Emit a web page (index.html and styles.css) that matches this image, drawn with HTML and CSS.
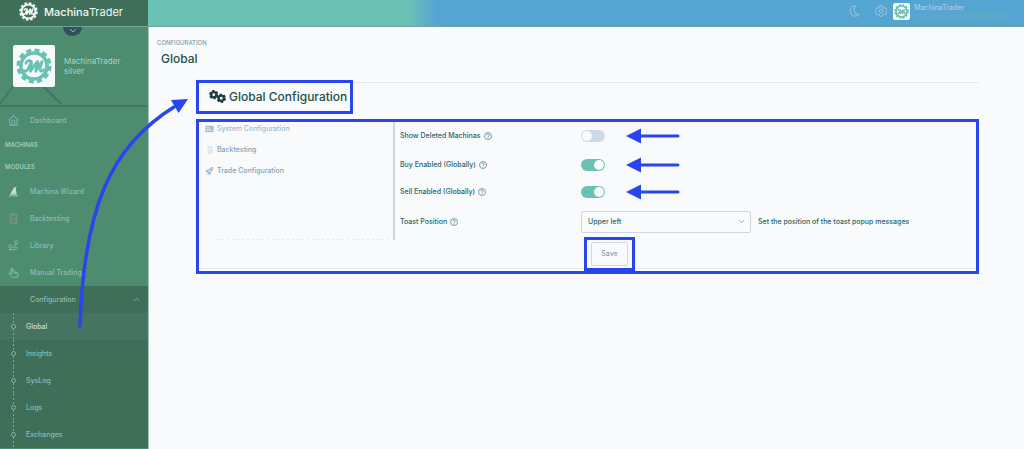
FILE: index.html
```html
<!DOCTYPE html>
<html lang="en">
<head>
<meta charset="utf-8">
<title>MachinaTrader - Global Configuration</title>
<link rel="stylesheet" href="styles.css">
</head>
<body>
<svg class="defs" aria-hidden="true">
  <symbol id="logo" viewBox="0 0 40 40">
    <circle cx="20" cy="20" r="17" fill="none" stroke="currentColor" stroke-width="5" stroke-dasharray="5.400 3.500"/>
    <circle cx="20" cy="20" r="14.500" fill="none" stroke="currentColor" stroke-width="4"/>
    <path d="M9 25c2 2 4 0 5-3l3-7c-3-2-6 0-6 2m6-2c1 4 0 7-1 11 3-4 5-8 8-11 0 4-2 7-2 11 3-5 4-9 7-11-1 4-3 8-2 10 1 1 2 1 4-1" fill="none" stroke="currentColor" stroke-width="3" stroke-linejoin="round" stroke-linecap="round"/>
  </symbol>
  <symbol id="help" viewBox="0 0 16 16">
    <circle cx="8" cy="8" r="7" fill="none" stroke="currentColor" stroke-width="1.800"/>
    <path d="M5.500 6.300c0-3.200 5-3.100 5 0 0 1.700-2.500 1.700-2.500 3.500M8 11v1.700" fill="none" stroke="currentColor" stroke-width="1.800"/>
  </symbol>
  <symbol id="arrow" viewBox="0 0 54 16">
    <path d="M12 8h40" stroke="currentColor" stroke-width="3" stroke-linecap="round"/>
    <path d="M0 8 15 .5v15z" fill="currentColor"/>
  </symbol>
  <symbol id="gear" viewBox="0 0 20 20">
    <circle cx="10" cy="10" r="5.500" fill="none" stroke="currentColor" stroke-width="5"/>
    <circle cx="10" cy="10" r="8" fill="none" stroke="currentColor" stroke-width="4" stroke-dasharray="4.800 3.578"/>
  </symbol>
</svg>

<header class="topbar">
  <a class="brand" href="#"><svg class="brand-logo"><use href="#logo"/></svg><span>Machina<span class="thin">Trader</span></span></a>
  <div class="tools">
    <button class="tool" aria-label="Dark mode"><svg viewBox="0 0 14 14"><path d="M8 1C3 1 1.500 4 1.500 7S4 13 7.500 13c2 0 3.500-1 4.500-2C6 11.500 4 5 8 1z"/></svg></button>
    <button class="tool" aria-label="Settings"><svg viewBox="0 0 14 14"><path d="m5.500 1h3l.5 2 1.500.8 2-.6L14 5.700l-1.400 1.400L14 8.500l-1.500 2.500-2-.6-1.500.8-.5 2h-3L5 11.200l-1.500-.8-2 .6L0 8.500l1.400-1.400L0 5.700l1.500-2.500 2 .6L5 3z"/><circle cx="7" cy="7" r="2"/></svg></button>
    <a class="account" href="#">
      <span class="account-avatar"><svg><use href="#logo"/></svg></span>
      <span class="account-text"><span>MachinaTrader</span><span class="mail">your-account@machinatrader.com</span></span>
    </a>
  </div>
</header>

<div class="shell">
  <aside class="sidebar">
    <button class="collapse" aria-label="Collapse profile"><svg viewBox="0 0 8 5"><path d="m1 1 3 3 3-3"/></svg></button>
    <section class="profile">
      <svg class="profile-lines" viewBox="0 0 148 20" aria-hidden="true"><path d="M0 19 14 0M42 0l19 19"/></svg>
      <span class="avatar"><svg><use href="#logo"/></svg></span>
      <p class="who">MachinaTrader<br>silver</p>
    </section>
    <nav>
      <a class="item" href="#"><svg viewBox="0 0 12 12"><path d="M.7 5.500 6 .8l5.300 4.700M2 4.500v6.800h8V4.500M4.500 11V7c0-2 3-2 3 0v4"/></svg>Dashboard</a>
      <h2 class="group">Machinas</h2>
      <h2 class="group">Modules</h2>
      <a class="item" href="#"><svg viewBox="0 0 12 12"><path class="fill" d="M2 9.500 6.500 1.500 9.500.8 8.500 3l1 6.500z"/><path class="mint" d="M.8 10.800h10.400M3.500 8.500h5.300"/></svg>Machina Wizard</a>
      <a class="item" href="#"><svg class="dim" viewBox="0 0 12 12"><path d="M2.500 1h7v10h-7zM4 3h3M4.500 5v4M7.500 4.500v4.500M6.500 7h2"/></svg>Backtesting</a>
      <a class="item" href="#"><svg viewBox="0 0 12 12"><circle cx="9" cy="2.500" r="1.700"/><circle cx="2.500" cy="7" r="1.700"/><path d="M9 4.200C9 7 5.500 5.500 5.500 7.500S10.500 7 10.500 9 7 10.500 1 10.700M2.500 8.700v2"/></svg>Library</a>
      <a class="item" href="#"><svg viewBox="0 0 12 12"><path d="M3.700 7.800V2c0-1.400 1.700-1.400 1.700 0v3.200L10 6c1 .2 1.200 1 1 2l-.7 3.300H5L1.300 7.500c-.7-1 .6-1.700 1.300-1zM7 5.500v1.700M8.800 6v1.500M1 3.500h1.500M6.800 3.500H8"/></svg>Manual Trading</a>
      <div class="submenu">
        <button class="item parent" aria-expanded="true"><span>Configuration</span><svg class="chev" viewBox="0 0 8 5"><path d="m1 4 3-3 3 3"/></svg></button>
        <ul>
          <li><a class="sub active" href="#">Global</a></li>
          <li><a class="sub" href="#">Insights</a></li>
          <li><a class="sub" href="#">SysLog</a></li>
          <li><a class="sub" href="#">Logs</a></li>
          <li><a class="sub" href="#">Exchanges</a></li>
        </ul>
      </div>
    </nav>
  </aside>

  <main class="main">
    <p class="crumb">Configuration</p>
    <h1>Global</h1>
    <div class="content">
      <div class="heading"><h2 class="marked title"><svg viewBox="0 0 34 26"><use href="#gear" x="0" y="0" width="19" height="19"/><use href="#gear" x="15" y="7" width="19" height="19"/></svg>Global Configuration</h2></div>
      <form class="marked panel">
        <nav class="tabs">
          <a class="pale" href="#"><svg viewBox="0 0 10 8"><path class="fill" d="M.5.5h9v7h-9z"/><path class="cut" d="M2 2.300h2M2 4h2M2 5.700h2M5.500 2v4M7 5.700h1.500"/></svg>System Configuration</a>
          <a href="#"><svg class="pale" viewBox="0 0 10 8"><path d="M2.500.5h5v7h-4V5M2.500 2.500h3M4 4.500h3"/></svg>Backtesting</a>
          <a href="#"><svg viewBox="0 0 10 10"><path d="M3 6C4 3 6 .8 9.300.7 9.300 4 7 6 4 7zM4 4H1.500L.7 6H3M6 6v2.500L4 9.300V7M1 9.300l1.500-1.500"/><circle cx="6.700" cy="3.300" r=".8"/></svg>Trade Configuration</a>
        </nav>
        <div class="fields">
          <div class="row deleted"><label for="deleted">Show Deleted Machinas <svg><use href="#help"/></svg></label><input class="switch" id="deleted" type="checkbox"><svg class="arrow"><use href="#arrow"/></svg></div>
          <div class="row buy"><label for="buy">Buy Enabled (Globally) <svg><use href="#help"/></svg></label><input class="switch" id="buy" type="checkbox" checked><svg class="arrow"><use href="#arrow"/></svg></div>
          <div class="row sell"><label for="sell">Sell Enabled (Globally) <svg><use href="#help"/></svg></label><input class="switch" id="sell" type="checkbox" checked><svg class="arrow"><use href="#arrow"/></svg></div>
          <div class="row toast"><label for="toast">Toast Position <svg><use href="#help"/></svg></label><span class="select"><select id="toast"><option>Upper left</option><option>Upper right</option></select><svg viewBox="0 0 8 5"><path d="m1 1 3 3 3-3"/></svg></span><span class="hint">Set the position of the toast popup messages</span></div>
          <div class="actions"><span class="marked save"><button type="button">Save</button></span></div>
        </div>
      </form>
    </div>
  </main>
</div>

<svg class="pointer" viewBox="0 0 112 232" aria-hidden="true"><path d="M4 229C8 110 35 49 98 10" fill="none" stroke="currentColor" stroke-width="3.500" stroke-linecap="round"/><path d="m112 2-17 1 7.500 13z" fill="currentColor"/></svg>
</body>
</html>
```

FILE: styles.css
```css
:root {
  --mark: #2945ee;
  --green: #4e8c6f;
  --green-dark: #3f6f59;
  --mint: #6bc1b3;
  --side-text: #87bdb6;
  --ink: #2a6663;
  --muted: #86a3b5;
  --line: #cbd7e4;
}
*, *::before { box-sizing: border-box; }
body {
  margin: 0;
  min-height: 100vh;
  display: flex;
  flex-direction: column;
  position: relative;
  background: #f8fafc;
  color: var(--ink);
  font: 500 7px/10px Inter, "Liberation Sans", sans-serif;
}
a { color: inherit; text-decoration: none; }
button, select, input { font: inherit; color: inherit; margin: 0; }
button { background: none; border: 0; padding: 0; }
h1, h2, p, ul { margin: 0; padding: 0; font-weight: 500; }
ul { list-style: none; }
svg { display: block; fill: none; stroke: currentColor; stroke-width: 1; flex: none; }
use { stroke: none; }
.defs { position: absolute; width: 0; height: 0; }

.topbar {
  display: flex;
  height: 27px;
  border-bottom: 1px solid #70a5a0;
  background: linear-gradient(90deg, var(--mint) 0 408px, #55a5d2 436px);
}
.brand {
  display: flex;
  align-items: center;
  gap: 6px;
  width: 148px;
  padding: 0 0 3px 19px;
  background: var(--green-dark);
  color: #f1f8f6;
  font-size: 11px;
}
.brand-logo { width: 19px; height: 19px; }
.thin { font-weight: 400; }
.tools {
  display: flex;
  align-items: center;
  gap: 14px;
  margin-left: auto;
  padding: 0 20px 4px 0;
  color: #a9cbdc;
}
.tool svg { width: 12px; height: 12px; }
.account { display: flex; align-items: center; gap: 4px; margin-left: -8px; }
.account-avatar, .avatar { background: #f7fafb; border-radius: 2px; color: var(--mint); }
.account-avatar svg { width: 17px; height: 17px; padding: 1px; }
.account-text { display: flex; flex-direction: column; width: 90px; line-height: 9px; }
.mail { font-size: 6px; line-height: 8px; white-space: nowrap; color: #68afbc; font-weight: 400; }

.shell { display: flex; flex: 1; }
.sidebar {
  position: relative;
  width: 149px;
  flex: none;
  background: var(--green);
  border-right: 1px solid #a9c2bf;
  color: var(--side-text);
}
.collapse {
  position: absolute;
  top: 0;
  left: 63px;
  width: 19px;
  height: 9px;
  display: grid;
  place-items: start center;
  padding-top: 1px;
  border-radius: 0 0 10px 10px;
  background: #32515a;
}
.collapse svg { width: 8px; height: 5px; }
.profile {
  position: relative;
  display: flex;
  align-items: flex-start;
  gap: 9px;
  padding: 18px 0 18px 13px;
  border-bottom: 2px solid #457560;
}
.profile-lines { position: absolute; left: 0; bottom: 0; width: 148px; height: 20px; color: #457560; stroke-width: 2; }
.avatar { position: relative; width: 42px; height: 42px; padding: 3px; }
.avatar svg { width: 36px; height: 36px; }
.who { padding-top: 11px; font-size: 8px; line-height: 10px; font-weight: 400; color: #a2d3ca; }
.item {
  display: flex;
  align-items: center;
  gap: 11px;
  width: 100%;
  height: 27px;
  padding: 0 8px;
}
.item svg { width: 11px; height: 11px; }
.item .fill { fill: #c6d9dd; stroke: none; }
.item .mint { stroke: #7ed4c6; }
.item .dim { color: #80998d; }
.group {
  padding-left: 5px;
  font-size: 6px;
  line-height: 22px;
  font-weight: 600;
  text-transform: uppercase;
  color: #9bcbc1;
}
.submenu { background: var(--green-dark); }
.item.parent { justify-content: space-between; padding-left: 30px; }
.item .chev { width: 7px; height: 5px; }
.sub {
  display: flex;
  align-items: center;
  gap: 10px;
  height: 27px;
  padding-left: 11px;
  background: linear-gradient(#76aa98 50%, transparent 50%) 13px 0 / 1px 4px repeat-y;
}
.sub::before {
  content: "";
  width: 5px;
  height: 5px;
  border: 1px solid #83b7aa;
  border-radius: 50%;
  background: var(--green-dark);
}
.sub.active { background-color: #477461; color: #c2ded9; }

.main { flex: 1; min-width: 0; padding: 12px 45px 12px 8px; }
.crumb { font-size: 6px; line-height: 8px; font-weight: 400; text-transform: uppercase; color: #5f919d; }
h1 { padding: 4px 0 0 4px; font-size: 12px; line-height: 16px; color: #1f4f48; }
.content { padding: 13px 0 0 39px; }
.marked { border: 3px solid var(--mark); }
.heading { display: flex; align-items: flex-start; background: linear-gradient(#e4e9ee, #e4e9ee) 0 2px / 100% 1px no-repeat; }
.title {
  display: flex;
  align-items: center;
  gap: 3px;
  padding: 5px 3px 6px 10px;
  background: #f8fafc;
  color: #1f4f48;
  font-size: 12px;
  line-height: 17px;
}
.title svg { width: 17px; height: 13px; color: #203d40; }
.panel {
  display: grid;
  grid-template-columns: 196px 1fr;
  margin-top: 5px;
  background: linear-gradient(#e4e9ee, #e4e9ee) 0 calc(100% - 2px) / 100% 1px no-repeat;
}
.tabs {
  display: flex;
  flex-direction: column;
  gap: 11px;
  height: 118px;
  padding: 2px 0 0 6px;
  border-right: 2px solid var(--line);
  color: var(--muted);
  background: repeating-linear-gradient(90deg, #e5eaef 0 2px, transparent 2px 5px) 18px 100% / 100% 1px no-repeat;
}
.tabs a { display: flex; align-items: center; gap: 3px; }
.tabs svg { width: 9px; height: 8px; }
.tabs .fill { fill: currentColor; stroke: none; }
.tabs .cut { stroke: #f8fafc; }
.pale { color: #a4bbc8; }
svg.pale { color: #cdd8e2; }
.fields { padding-left: 5px; }
.row { display: flex; align-items: center; }
.row.deleted { height: 28px; }
.row.buy { height: 30px; }
.row.sell { height: 24px; }
.row.toast { height: 33px; padding-top: 2px; }
.row label { display: flex; align-items: center; gap: 3px; width: 181px; flex: none; }
.row label svg { width: 8px; height: 8px; color: #7196a2; }
.switch {
  appearance: none;
  display: flex;
  width: 24px;
  height: 12px;
  padding: 1px;
  border-radius: 6px;
  background: #cfdae6;
}
.switch::before { content: ""; width: 10px; height: 10px; border-radius: 50%; background: #f8fafc; }
.switch:checked { background: var(--mint); justify-content: flex-end; }
.arrow { width: 54px; height: 16px; margin-left: 21px; color: var(--mark); }
.select { display: grid; align-items: center; width: 170px; }
.select > * { grid-area: 1 / 1; }
.select svg { width: 7px; height: 5px; justify-self: end; margin-right: 6px; color: #8ba6b8; pointer-events: none; }
select {
  appearance: none;
  width: 100%;
  height: 22px;
  padding: 0 6px;
  border: 1px solid var(--line);
  border-radius: 2px;
  background: none;
}
.hint { margin-left: 7px; }
.actions { padding-left: 184px; }
.save { display: inline-block; padding: 2px 4px; vertical-align: top; }
.save button {
  display: block;
  width: 37px;
  height: 24px;
  border: 1px solid var(--line);
  border-radius: 2px;
  color: var(--muted);
}
.pointer { position: absolute; left: 76px; top: 97px; width: 112px; height: 232px; color: var(--mark); stroke: none; pointer-events: none; }
```
